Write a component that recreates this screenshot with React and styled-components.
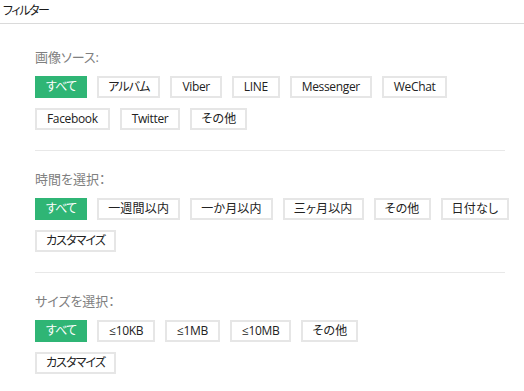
import React, { useState } from "react";
import styled, { createGlobalStyle } from "styled-components";

const GlobalStyle = createGlobalStyle`
  body {
    margin: 0;
    background: #ffffff;
    font-family: "Open Sans", "Noto Sans CJK JP", sans-serif;
    font-feature-settings: "palt";
  }
`;

const groups = [
  {
    key: "source",
    title: "画像ソース:",
    rows: [
      ["すべて", "アルバム", "Viber", "LINE", "Messenger", "WeChat"],
      ["Facebook", "Twitter", "その他"],
    ],
  },
  {
    key: "time",
    title: "時間を選択：",
    rows: [
      ["すべて", "一週間以内", "一か月以内", "三ヶ月以内", "その他", "日付なし"],
      ["カスタマイズ"],
    ],
  },
  {
    key: "size",
    title: "サイズを選択：",
    rows: [["すべて", "≤10KB", "≤1MB", "≤10MB", "その他"], ["カスタマイズ"]],
  },
];

// kana runs are set tighter than kanji, latin almost untouched
function scriptOf(text) {
  if (/[\u4e00-\u9fff]/.test(text)) return "kanji";
  if (/[\u3040-\u30ff]/.test(text)) return "kana";
  return "latin";
}

const spacing = { kanji: "0.2px", kana: "-0.9px", latin: "-0.35px" };

export default function App() {
  const [selected, setSelected] = useState({
    source: "すべて",
    time: "すべて",
    size: "すべて",
  });

  function choose(key, option) {
    setSelected({ ...selected, [key]: option });
  }

  return (
    <>
      <GlobalStyle />
      <Page>
        <Header>フィルター</Header>
        <Body>
          {groups.map((group, i) => (
            <Section key={group.key} last={i === groups.length - 1}>
              <Label>{group.title}</Label>
              <Options>
                {group.rows.map((row, r) => (
                  <Row key={r}>
                    {row.map((option) => (
                      <Option
                        key={option}
                        kind={scriptOf(option)}
                        active={selected[group.key] === option}
                        onClick={() => choose(group.key, option)}
                      >
                        {option}
                      </Option>
                    ))}
                  </Row>
                ))}
              </Options>
            </Section>
          ))}
        </Body>
      </Page>
    </>
  );
}

const Page = styled.div`
  width: 524px;
  height: 391px;
  overflow: hidden;
  background: #ffffff;
`;

const Header = styled.div`
  height: 23px;
  line-height: 21px;
  padding-left: 3px;
  font-size: 12px;
  letter-spacing: -1.4px;
  color: #1a1a1a;
  border-bottom: 1px solid #dadada;
`;

const Body = styled.div`
  padding: 5px 19px 0 35px;
`;

const Section = styled.div`
  padding: 18px 0 20px 0;
  border-bottom: ${(props) => (props.last ? "none" : "1px solid #e8e8e8")};
`;

const Label = styled.div`
  height: 20px;
  line-height: 20px;
  font-size: 13px;
  color: #808080;
  margin-bottom: 9px;
`;

const Options = styled.div`
  display: flex;
  flex-direction: column;
  gap: 10px;
`;

const Row = styled.div`
  display: flex;
  gap: 10px;
`;

const Option = styled.button`
  height: 22px;
  padding: 0 ${(props) => (props.kind === "latin" ? "10px" : "9px")};
  font-family: inherit;
  font-feature-settings: "palt";
  font-size: 12px;
  line-height: 18px;
  letter-spacing: ${(props) => spacing[props.kind]};
  cursor: pointer;
  border: 2px solid ${(props) => (props.active ? "#2fb575" : "#e6e6e6")};
  background-color: ${(props) => (props.active ? "#2fb575" : "#ffffff")};
  color: ${(props) => (props.active ? "#ffffff" : "#222222")};
  white-space: nowrap;
`;
